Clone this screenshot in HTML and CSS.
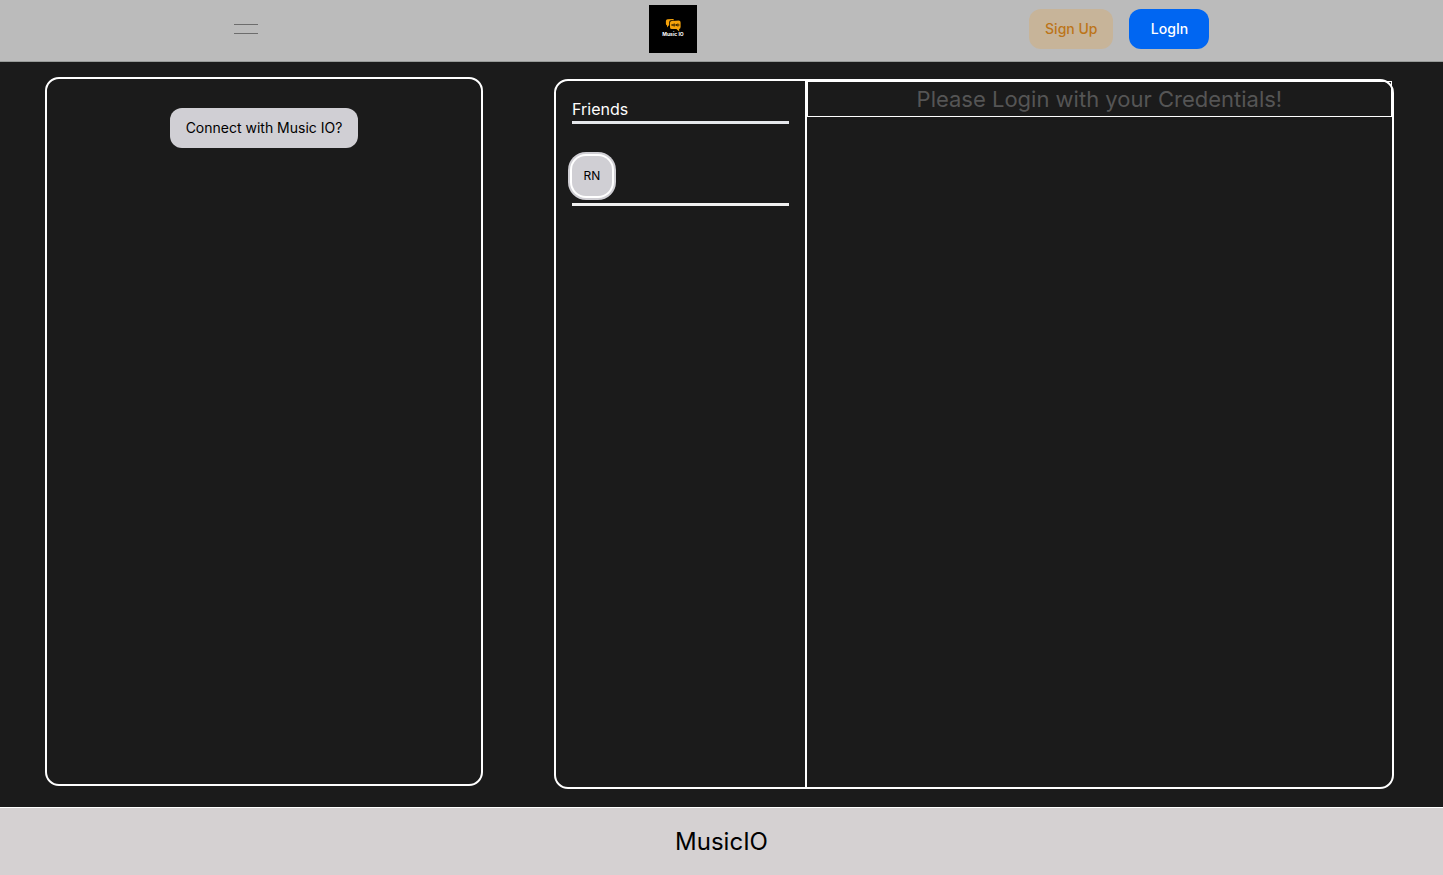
FILE: index.html
```html
<!DOCTYPE html>
<html lang="en">
<head>
<meta charset="utf-8">
<meta name="viewport" content="width=device-width, initial-scale=1">
<title>MusicIO</title>
<link rel="stylesheet" href="styles.css">
</head>
<body>
<header class="navbar">
  <nav class="navbar-inner">
    <button class="menu-toggle" type="button" aria-label="Open menu"><span class="menu-line"></span><span class="menu-line"></span></button>
    <a class="brand" href="#" aria-label="Music IO">
      <svg class="logo" viewBox="0 0 48 48" aria-hidden="true">
        <rect width="48" height="48" fill="#000"/>
        <path d="M18.6 14.2 23.6 13.9Q25 13.9 25 15.2H22Q20.2 15.4 20.2 17.2V20.6H19.6L18 22.4V20.4Q16.9 20 16.9 18.8V16Q17 14.4 18.6 14.2Z" fill="#f5a20a"/>
        <path d="M22.7 16 29.7 15.6Q31.6 15.6 31.6 17.6V22Q31.5 23.9 30.1 24.1L30.3 26.4 27.4 24.1H22.8Q21 24.1 21 22.2V17.8Q21 16.1 22.7 16Z" fill="#f5a20a"/>
        <path d="M22 20h8.6M23.9 19v2M25.2 18.4v3.2M27.5 19v2M28.9 18.4v3.2" stroke="#3a2500" stroke-width=".9" fill="none"/>
        <text class="logo-text" x="24" y="30.6" text-anchor="middle">Music IO</text>
      </svg>
    </a>
    <div class="auth">
      <button class="btn btn-signup" type="button">Sign Up</button>
      <button class="btn btn-login" type="button">LogIn</button>
    </div>
  </nav>
</header>
<main class="content">
  <section class="panel connect">
    <button class="btn btn-connect" type="button">Connect with Music IO?</button>
  </section>
  <section class="panel chat">
    <aside class="friends">
      <h2 class="friends-title">Friends</h2>
      <div class="friend"><button class="avatar" type="button">RN</button></div>
    </aside>
    <div class="messages">
      <p class="notice">Please Login with your Credentials!</p>
    </div>
  </section>
</main>
<footer class="footer">MusicIO</footer>
</body>
</html>
```
FILE: styles.css
```css
* { box-sizing: border-box; }

body {
  margin: 0;
  min-height: 100vh;
  display: flex;
  flex-direction: column;
  background: #1b1b1b;
  color: #fff;
  font: 16px/24px Inter, "Liberation Sans", sans-serif;
}

button { border: 0; padding: 0; font: inherit; cursor: pointer; }

.navbar {
  background: #bbb;
  border-bottom: 1px solid #989b99;
  height: 62px;
  padding-bottom: 3px;
}

.navbar-inner {
  max-width: 1024px;
  height: 100%;
  margin: 0 auto;
  padding: 0 24px;
  display: flex;
  align-items: center;
  justify-content: space-between;
}

.menu-toggle {
  width: 24px;
  height: 24px;
  background: none;
  display: flex;
  flex-direction: column;
  justify-content: center;
  gap: 8px;
}

.menu-line { height: 1px; width: 100%; background: #6c6c6c; }

.brand { padding-left: 60px; }
.logo { display: block; width: 48px; height: 48px; }
.logo-text { font: 700 5px Inter, sans-serif; fill: #fff; }

.auth { display: flex; gap: 16px; }

.btn {
  min-width: 80px;
  height: 40px;
  padding: 0 16px;
  border-radius: 12px;
  font-size: 14px;
  line-height: 20px;
}

.btn-signup { background: #c7b499; color: #bc7419; font-weight: 500; }
.btn-login { background: #0066f2; color: #fff; font-weight: 500; }
.btn-connect { background: #d0cfd4; color: #000; }

.content {
  flex: 1;
  display: grid;
  grid-template-columns: 438fr 840fr;
  gap: 71px;
  padding: 15px 49px 18px 45px;
}

.panel { border: 2px solid #fff; border-radius: 14px; }

.connect {
  margin-bottom: 3px;
  padding-top: 29px;
  display: flex;
  align-items: flex-start;
  justify-content: center;
}

.chat {
  margin-top: 2px;
  display: grid;
  grid-template-columns: 3fr 7fr;
}

.friends { border-right: 2px solid #fff; padding: 16px; }

.friends-title {
  margin: 0;
  border-bottom: 3px solid #e5e7eb;
  font-size: 16px;
  font-weight: 400;
}

.friend {
  padding: 32px 0 7px;
  border-bottom: 3px solid #f0f0f0;
}

.avatar {
  display: block;
  width: 40px;
  height: 40px;
  border-radius: 14px;
  background: #d0cfd4;
  box-shadow: 0 0 0 2px #fff, 0 0 0 4px #d0cfd4;
  color: #000;
  font-size: 12px;
}

.notice {
  margin: 0;
  border: 1px solid #fff;
  color: #555;
  font-size: 22px;
  line-height: 34px;
  text-align: center;
}

.footer {
  border-top: 1px solid #fff;
  padding: 16px;
  background: #d5d1d2;
  color: #000;
  font-size: 24px;
  line-height: 35px;
  text-align: center;
}
```
